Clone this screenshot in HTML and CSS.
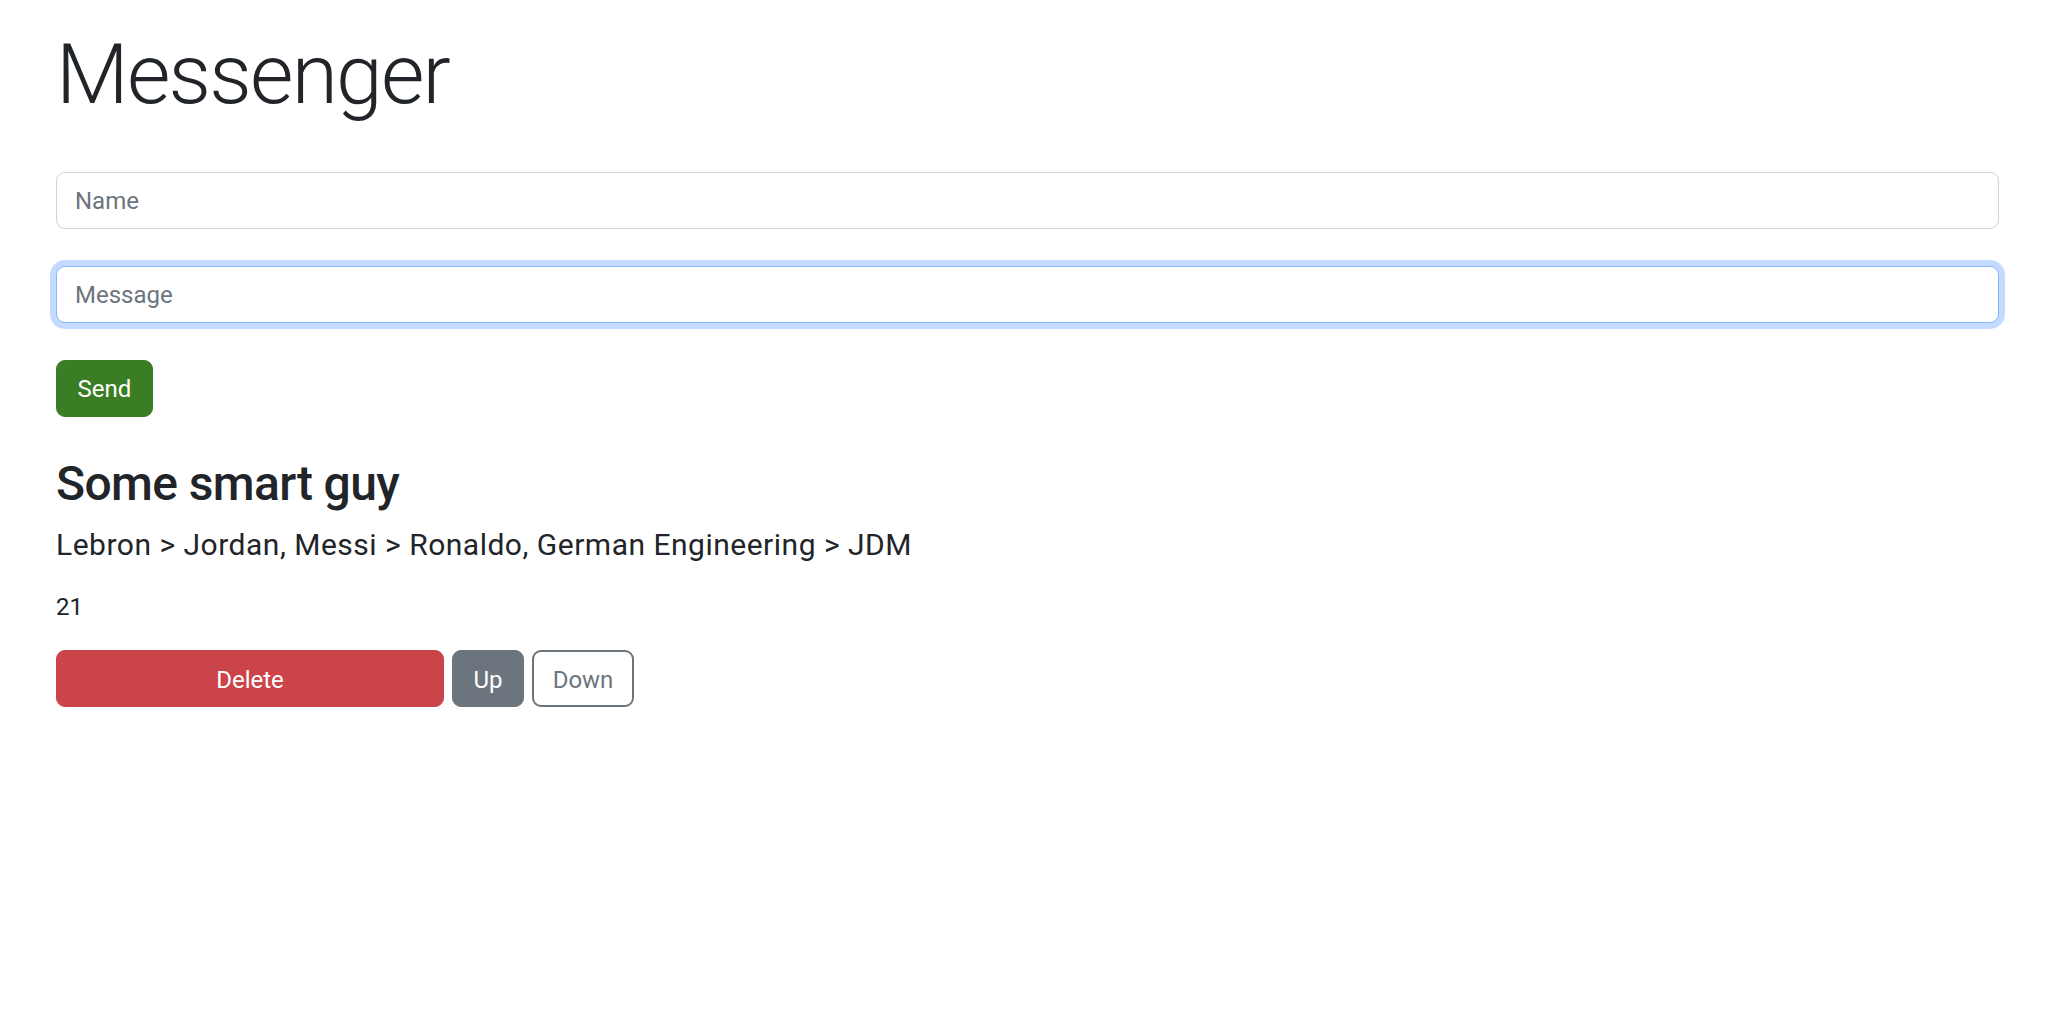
FILE: index.html
```html
<!DOCTYPE html>
<html lang="en">
<head>
<meta charset="utf-8">
<title>Messenger</title>
<link rel="stylesheet" href="styles.css">
</head>
<body>
<main class="page">
  <h1 class="title">Messenger</h1>
  <form class="form">
    <input class="field" type="text" placeholder="Name">
    <input class="field field-focus" type="text" placeholder="Message">
    <button type="button" class="btn btn-send">Send</button>
  </form>
  <section class="message">
    <h2 class="author">Some smart guy</h2>
    <p class="text">Lebron &gt; Jordan, Messi &gt; Ronaldo, German Engineering &gt; JDM</p>
    <p class="votes">21</p>
    <div class="actions">
      <button type="button" class="btn btn-delete">Delete</button>
      <button type="button" class="btn btn-up">Up</button>
      <button type="button" class="btn btn-down">Down</button>
    </div>
  </section>
</main>
</body>
</html>
```

FILE: styles.css
```css
* { box-sizing: border-box; }

html, body {
  margin: 0;
  padding: 0;
  background: #fff;
}

body {
  font-family: Roboto, "Liberation Sans", sans-serif;
  color: #212529;
}

.page {
  padding: 25px 63px 0 56px;
}

.title {
  margin: 0;
  font-size: 84px;
  font-weight: 300;
  line-height: 1.2;
  letter-spacing: -1.8px;
}

.form {
  margin-top: 46px;
  display: flex;
  flex-direction: column;
  align-items: flex-start;
  gap: 37px;
}

.field {
  display: block;
  width: 100%;
  height: 57px;
  padding: 2px 18px 0;
  font-family: inherit;
  font-size: 24px;
  color: #212529;
  background: #fff;
  border: 1.5px solid #ced4da;
  border-radius: 9px;
  outline: none;
}

.field::placeholder {
  color: #6c757d;
}

.field-focus {
  border-color: #86b7fe;
  box-shadow: 0 0 0 6px rgba(13, 110, 253, 0.25);
}

.btn {
  height: 57px;
  padding: 2px 18px 0;
  font-family: inherit;
  font-size: 24px;
  font-weight: 400;
  border-radius: 9px;
  border: 1.5px solid transparent;
  cursor: pointer;
}

.btn-send {
  width: 97px;
  padding: 2px 0 0;
  background: #3a7d24;
  border-color: #3a7d24;
  color: #fff;
}

.message {
  margin-top: 38px;
}

.author {
  margin: 0;
  font-size: 48px;
  font-weight: 500;
  line-height: 1.2;
  letter-spacing: -0.6px;
}

.text {
  margin: 10px 0 0;
  font-size: 30px;
  line-height: 1.5;
  letter-spacing: 0.5px;
}

.votes {
  margin: 22px 0 0;
  font-size: 24px;
  line-height: 1.5;
}

.actions {
  margin-top: 25px;
  display: flex;
  gap: 8px;
}

.btn-delete {
  width: 388px;
  background: #cb444a;
  border-color: #cb444a;
  color: #fff;
}

.btn-up {
  width: 72px;
  padding: 2px 0 0;
  background: #6c757d;
  border-color: #6c757d;
  color: #fff;
}

.btn-down {
  width: 102px;
  padding: 2px 0 0;
  background: #fff;
  border: 2px solid #6c757d;
  color: #6c757d;
}
```
